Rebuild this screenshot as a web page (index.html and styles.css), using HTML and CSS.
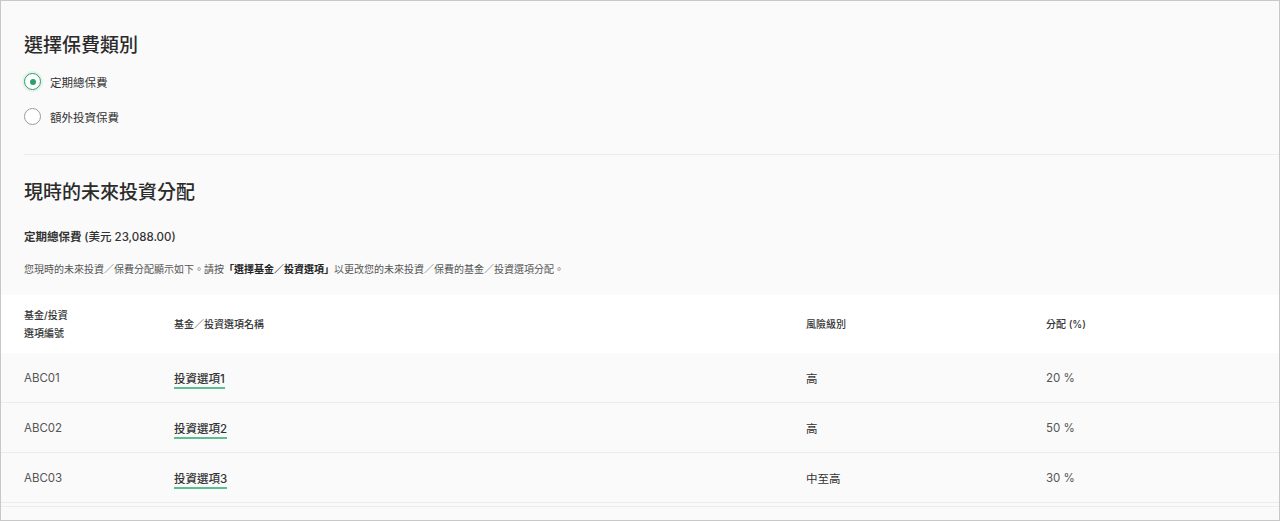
FILE: index.html
```html
<!DOCTYPE html>
<html lang="zh-Hant">
<head>
  <meta charset="UTF-8">
  <meta name="viewport" content="width=device-width, initial-scale=1.0">
  <title>未來投資分配</title>
  <link rel="stylesheet" href="styles.css">
</head>
<body>
  <div class="page">

    <!-- Premium type -->
    <section class="premium-type">
      <h2 class="section-title">選擇保費類別</h2>
      <label class="radio-row">
        <input type="radio" name="premiumType" checked>
        <span class="radio-mark"></span>
        <span class="radio-text">定期總保費</span>
      </label>
      <label class="radio-row">
        <input type="radio" name="premiumType">
        <span class="radio-mark"></span>
        <span class="radio-text">額外投資保費</span>
      </label>
    </section>

    <!-- Current allocation -->
    <section class="allocation">
      <h2 class="section-title">現時的未來投資分配</h2>
      <p class="premium-amount">定期總保費 <span class="amount">(美元 23,088.00)</span></p>
      <p class="hint">您現時的未來投資／保費分配顯示如下。請按<strong>「選擇基金／投資選項」</strong>以更改您的未來投資／保費的基金／投資選項分配。</p>

      <table class="fund-table">
        <thead>
          <tr>
            <th class="col-code">基金/投資<br>選項編號</th>
            <th class="col-name">基金／投資選項名稱</th>
            <th class="col-risk">風險級別</th>
            <th class="col-share">分配 (%)</th>
          </tr>
        </thead>
        <tbody id="fundRows"></tbody>
      </table>
      <div class="table-end"></div>
    </section>

  </div>

  <script>
    const funds = [
      { code: 'ABC01', name: '投資選項1', risk: '高', share: 20 },
      { code: 'ABC02', name: '投資選項2', risk: '高', share: 50 },
      { code: 'ABC03', name: '投資選項3', risk: '中至高', share: 30 }
    ];

    function renderFunds() {
      const body = document.getElementById('fundRows');
      body.innerHTML = '';
      funds.forEach(fund => {
        const row = document.createElement('tr');
        row.innerHTML = `
          <td class="code">${fund.code}</td>
          <td><a href="#" class="fund-link">${fund.name}</a></td>
          <td class="risk">${fund.risk}</td>
          <td class="share">${fund.share} %</td>
        `;
        body.appendChild(row);
      });
    }

    renderFunds();
  </script>
</body>
</html>
```

FILE: styles.css
```css
html, body {
  margin: 0;
  padding: 0;
  height: 100%;
}
body {
  font-family: Inter, "Noto Sans CJK TC", sans-serif;
  color: #333;
  background-color: #fafafa;
}
.page {
  box-sizing: border-box;
  height: 521px;
  border: 1px solid #c8c8c8;
  overflow: hidden;
}
.section-title {
  font-size: 19px;
  font-weight: 500;
  line-height: 24px;
  margin: 0;
  color: #2b2b2b;
}
.premium-type {
  margin-left: 23px;
  padding: 33px 0 20px 0;
  border-bottom: 1px solid #ececec;
}
.premium-type .section-title {
  margin-bottom: 6px;
}
.radio-row {
  display: flex;
  align-items: center;
  height: 35px;
  cursor: pointer;
}
.radio-row input {
  display: none;
}
.radio-mark {
  box-sizing: border-box;
  width: 17px;
  height: 17px;
  border-radius: 50%;
  border: 1px solid #9a9a9a;
  background: #fff;
  margin-right: 9px;
  display: flex;
  align-items: center;
  justify-content: center;
}
.radio-row input:checked + .radio-mark {
  border-color: #2e9e6b;
  box-shadow: 0 0 0 2px #e3f3ea;
}
.radio-row input:checked + .radio-mark::after {
  content: "";
  width: 6px;
  height: 6px;
  border-radius: 50%;
  background: #2e9e6b;
}
.radio-text {
  font-size: 11.5px;
  color: #333;
}
.allocation {
  padding-top: 26px;
}
.allocation .section-title {
  padding-left: 23px;
}
.premium-amount {
  margin: 24px 0 0 23px;
  font-size: 11.5px;
  font-weight: 700;
  line-height: 16px;
}
.premium-amount .amount {
  font-weight: 500;
}
.hint {
  margin: 16px 0 0 23px;
  font-size: 10px;
  line-height: 16px;
  color: #555;
}
.hint strong {
  color: #222;
}
.fund-table {
  width: 100%;
  border-collapse: collapse;
  margin-top: 18px;
}
.fund-table th {
  background: #fff;
  font-size: 10px;
  font-weight: 500;
  line-height: 18px;
  text-align: left;
  color: #333;
  height: 58px;
  padding: 0;
  vertical-align: middle;
}
.fund-table td {
  height: 49px;
  padding: 0;
  font-size: 11.5px;
  color: #555;
  border-bottom: 1px solid #ececec;
  vertical-align: middle;
}
.col-code {
  width: 150px;
  padding-left: 23px !important;
}
.fund-table td.code {
  padding-left: 23px;
}
.col-name {
  width: 632px;
}
.col-risk {
  width: 240px;
}
.fund-table td.risk {
  color: #333;
}
.fund-link {
  color: #333;
  font-weight: 500;
  text-decoration: none;
  border-bottom: 2px solid #5cbf91;
  padding-bottom: 1px;
}
.table-end {
  height: 3px;
  border-bottom: 1px solid #ececec;
}
```
